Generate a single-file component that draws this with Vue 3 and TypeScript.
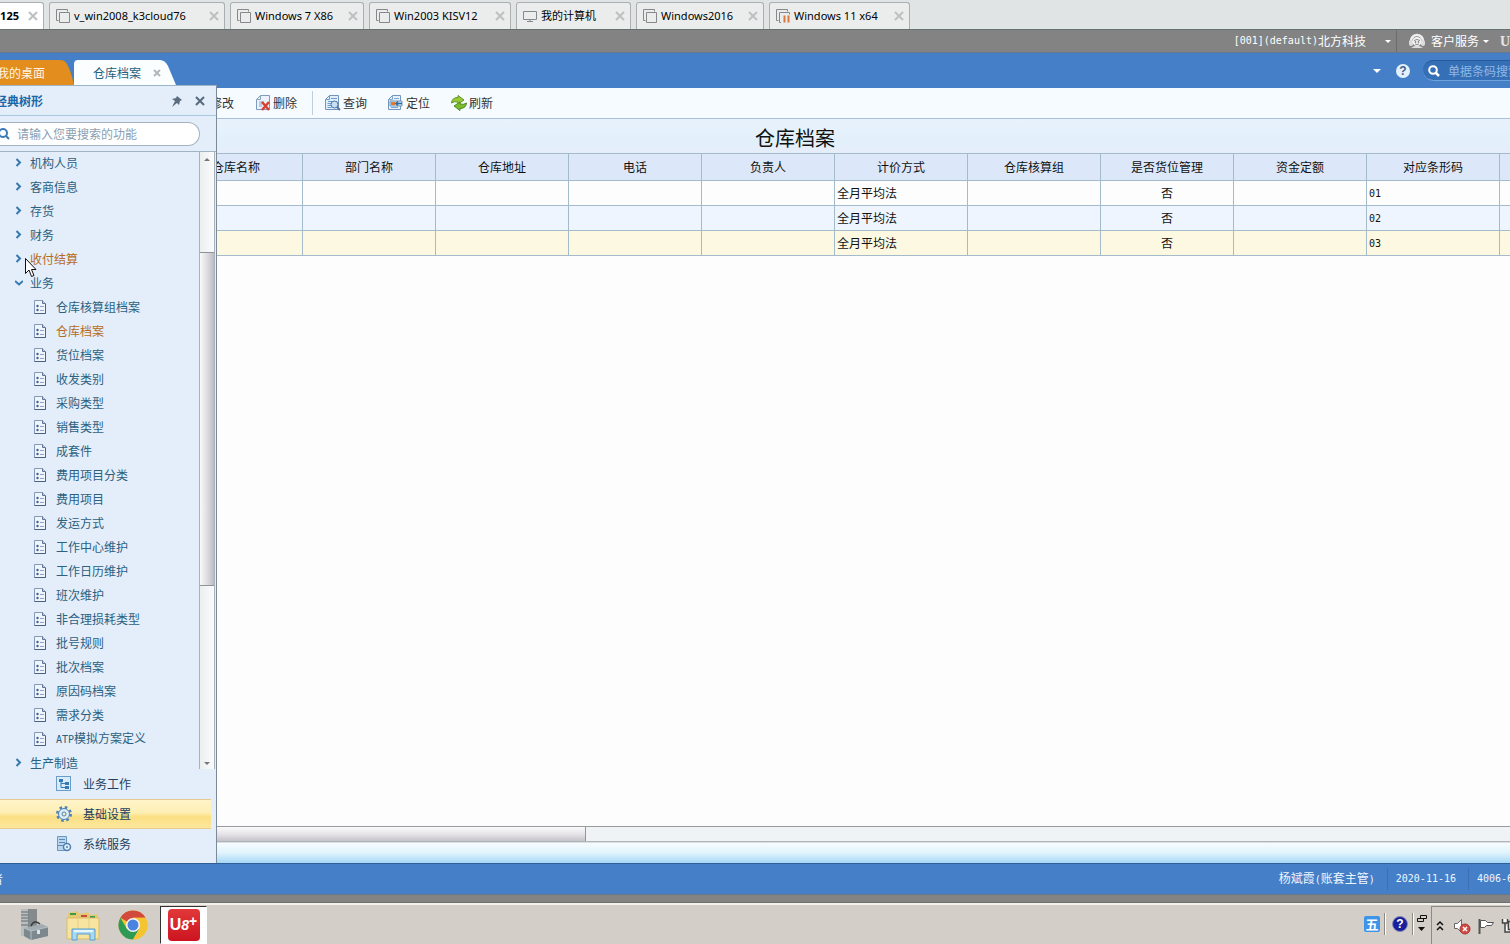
<script setup lang="ts">
import { ref } from 'vue'

interface MachineTab {
  name: string
  width: number
  kind: 'vm' | 'computer' | 'paused'
}

interface TreeNode {
  label: string
  code?: string
  kind: 'closed' | 'open' | 'leaf'
  hot?: boolean
}

const machines: MachineTab[] = [
  { name: 'v_win2008_k3cloud76', width: 176, kind: 'vm' },
  { name: 'Windows 7 X86', width: 134, kind: 'vm' },
  { name: 'Win2003 KISV12', width: 142, kind: 'vm' },
  { name: '我的计算机', width: 115, kind: 'computer' },
  { name: 'Windows2016', width: 128, kind: 'vm' },
  { name: 'Windows 11 x64', width: 141, kind: 'paused' },
]

const leaf = (label: string, hot = false): TreeNode => ({ label, kind: 'leaf', hot })

const nodes: TreeNode[] = [
  { label: '机构人员', kind: 'closed' },
  { label: '客商信息', kind: 'closed' },
  { label: '存货', kind: 'closed' },
  { label: '财务', kind: 'closed' },
  { label: '收付结算', kind: 'closed', hot: true },
  { label: '业务', kind: 'open' },
  leaf('仓库核算组档案'),
  leaf('仓库档案', true),
  leaf('货位档案'),
  leaf('收发类别'),
  leaf('采购类型'),
  leaf('销售类型'),
  leaf('成套件'),
  leaf('费用项目分类'),
  leaf('费用项目'),
  leaf('发运方式'),
  leaf('工作中心维护'),
  leaf('工作日历维护'),
  leaf('班次维护'),
  leaf('非合理损耗类型'),
  leaf('批号规则'),
  leaf('批次档案'),
  leaf('原因码档案'),
  leaf('需求分类'),
  { label: '模拟方案定义', code: 'ATP', kind: 'leaf' },
  { label: '生产制造', kind: 'closed' },
]

const columns = ['仓库名称', '部门名称', '仓库地址', '电话', '负责人', '计价方式', '仓库核算组', '是否货位管理', '资金定额', '对应条形码']
const rows = ['01', '02', '03']
const selected = ref('03')
const treeQuery = ref('')
const billQuery = ref('')
</script>

<template>
  <div class="page">
    <nav class="machines" aria-label="虚拟机">
      <div class="machine current">
        <b>125</b>
        <button class="close" aria-label="关闭"><svg width="10" height="10" viewBox="0 0 10 10"><path d="M1 1l8 8M9 1l-8 8" /></svg></button>
      </div>
      <div v-for="m in machines" :key="m.name" class="machine" :style="{ width: m.width + 'px' }">
        <svg v-if="m.kind === 'computer'" class="mi" width="16" height="16" viewBox="0 0 16 16"><path d="M1.500 3.500h13v8h-13zM5 13.500h6M8 11.500v2" /></svg>
        <svg v-else-if="m.kind === 'vm'" class="mi" width="16" height="16" viewBox="0 0 16 16"><path d="M3.500 12.500h-2v-11h11v2M4.500 4.500h10v10h-10z" /></svg>
        <svg v-else class="mi" width="16" height="16" viewBox="0 0 16 16"><path d="M3.500 12.500h-2v-11h11v2M6 14.500h-1.500v-10h10v2" /><path class="pause" d="M9.500 7.500v7M13.500 7.500v7" /></svg>
        <span class="mname">{{ m.name }}</span>
        <button class="close" aria-label="关闭"><svg width="10" height="10" viewBox="0 0 10 10"><path d="M1 1l8 8M9 1l-8 8" /></svg></button>
      </div>
    </nav>

    <div class="account">
      <button class="acct"><span class="mono">[001](default)</span>北方科技<i class="caret" /></button>
      <button class="service">
        <svg width="16" height="16" viewBox="0 0 16 16">
          <path d="M2 8a6 6 0 0 1 12 0" fill="none" stroke="#eee" stroke-width="2.500" />
          <rect x="0" y="7" width="4" height="6" rx="2" fill="#ddd" /><rect x="12" y="7" width="4" height="6" rx="2" fill="#ddd" />
          <circle cx="8" cy="8.500" r="4.500" fill="#f4f4f4" /><path d="M5 7.500q3-2 6 0M6 11q2 1 4 0" fill="none" stroke="#888" />
          <circle cx="6.500" cy="9" r=".8" fill="#555" /><circle cx="9.500" cy="9" r=".8" fill="#555" />
          <path d="M2 15q6-5 12 0z" fill="#ddd" />
        </svg>
        客户服务<i class="caret" />
      </button>
      <b class="brand">U</b>
    </div>

    <div class="shell">
      <header class="topbar">
        <button class="ptab desk">
          <svg width="74" height="25" viewBox="0 0 74 25"><path d="M0 0H60Q65 0 67 4Q71 11 74 25H0z" fill="#e28d1d" /></svg>
          <span>我的桌面</span>
        </button>
        <button class="ptab file">
          <svg width="102" height="25" viewBox="0 0 102 25"><path d="M0 25V4Q0 0 4 0H86Q91 0 94 6L102 25z" fill="#fbfeff" /></svg>
          <span>仓库档案</span>
          <svg class="tx" width="8" height="8" viewBox="0 0 8 8"><path d="M1 1l6 6M7 1l-6 6" stroke="#b2b6ba" stroke-width="2" /></svg>
        </button>
        <div class="tools">
          <i class="caret wide" />
          <button class="help" aria-label="帮助">?</button>
          <label class="bill">
            <svg width="12" height="12" viewBox="0 0 12 12"><circle cx="5" cy="5" r="3.800" fill="none" stroke="#fff" stroke-width="2" /><path d="M8 8l3 3" stroke="#fff" stroke-width="2.500" /></svg>
            <input v-model="billQuery" placeholder="单据条码搜索" aria-label="单据条码搜索" />
          </label>
        </div>
      </header>

      <div class="toolbar">
        <div class="group">
          <button>
            <svg width="16" height="16" viewBox="0 0 16 16"><path d="M2.500 1.500h11v13h-11z" fill="#eef5fc" stroke="#8ba4bf" /></svg>修改
          </button>
          <button>
            <svg width="16" height="16" viewBox="0 0 16 16"><path d="M5.500.500h9v14h-13v-10z" fill="#eaf3fc" stroke="#7f9cbe" /><path d="M1.500 4.500h4v-4M4 7h5M4 9h3M4 11h3" fill="none" stroke="#8ba4bf" /><path d="M7 7l7 8M14 7l-7 8" stroke="#d8402f" stroke-width="2.500" /></svg>删除
          </button>
        </div>
        <i class="split" />
        <div class="group">
          <button>
            <svg width="16" height="16" viewBox="0 0 16 16"><path d="M4.500.500h9v14h-13v-10z" fill="#e1effb" stroke="#7495bb" /><path d="M.5 4.500h4v-4M6 3.500h6M3 6.500h9M2.500 8.500h4M2.500 10.500h4M2.500 12.500h4" fill="none" stroke="#6f9cce" /><circle cx="9.500" cy="9.500" r="3.500" fill="#c6e0f4" stroke="#54779d" /><path d="M12 12l3 3" stroke="#54779d" stroke-width="2" /></svg>查询
          </button>
          <button>
            <svg width="16" height="16" viewBox="0 0 16 16"><path d="M4.500.500h8v14h-12v-10z" fill="#e6f1fb" stroke="#7495bb" /><path d="M.5 4.500h4v-4M6 3.500h5M3 12.500h7" fill="none" stroke="#7fa8d2" /><path d="M2 6h12v5H2z" fill="#cfe2f3" stroke="#7495bb" /><path d="M3 7h4v3H3z" fill="#e27a30" /><path d="M7 8.500h7M10 6.500l-2 2 2 2" fill="none" stroke="#2f6c9f" stroke-width="1.500" /></svg>定位
          </button>
          <button>
            <svg width="16" height="16" viewBox="0 0 16 16"><path d="M.5 8Q1 2.500 7 2.500V.500l6 4.500-6 4V7Q3 6 .5 8z" fill="#9acb35" stroke="#5c9423" /><path d="M15.500 8Q15 13.500 9 13.500v2L3 11l6-4v2q4 1 6.500-1z" fill="#7cbb2c" stroke="#4f8a20" /></svg>刷新
          </button>
        </div>
      </div>

      <h1 class="title">仓库档案</h1>
      <div class="grid">
        <table>
          <thead>
            <tr><th class="lead" /><th v-for="c in columns" :key="c" scope="col">{{ c }}</th><th /></tr>
          </thead>
          <tbody>
            <tr v-for="r in rows" :key="r" :class="{ picked: selected === r }" @click="selected = r">
              <td /><td /><td /><td /><td /><td />
              <td>全月平均法</td><td /><td class="mid">否</td><td /><td><span class="mono">{{ r }}</span></td><td />
            </tr>
          </tbody>
        </table>
      </div>
      <div class="hbar"><div class="hthumb" /></div>
      <div class="glow" />

      <aside class="panel">
        <div class="phead">
          <b>经典树形</b>
          <button class="pin" aria-label="固定"><svg width="12" height="12" viewBox="0 0 12 12"><path d="M6 1l5 4-2 1-1 4-2-2-5 4 3-6-3-2 4-1z" fill="#5c6d7f" /></svg></button>
          <button aria-label="关闭"><svg width="10" height="10" viewBox="0 0 10 10"><path d="M1 1l8 8M9 1l-8 8" stroke="#56697c" stroke-width="2" /></svg></button>
        </div>
        <div class="find">
          <label>
            <svg width="10" height="12" viewBox="0 0 10 12"><circle cx="3" cy="5" r="4" fill="none" stroke="#3d7ab8" stroke-width="2" /><path d="M6 8l3 3" stroke="#3d7ab8" stroke-width="2" /></svg>
            <input v-model="treeQuery" placeholder="请输入您要搜索的功能" aria-label="搜索功能" />
          </label>
        </div>
        <div class="treebox">
          <ul class="tree">
            <li v-for="n in nodes" :key="n.label" :class="[n.kind, { hot: n.hot }]">
              <svg v-if="n.kind === 'closed'" width="8" height="10" viewBox="0 0 8 10"><path d="M1.500 1l3.500 3.500L1.500 8" fill="none" stroke="#3679ae" stroke-width="2" /></svg>
              <svg v-else-if="n.kind === 'open'" width="8" height="10" viewBox="0 0 8 10"><path d="M0 3l4 3.500L8 3" fill="none" stroke="#3679ae" stroke-width="2" /></svg>
              <svg v-else width="12" height="14" viewBox="0 0 12 14">
                <path d="M.5.500h8l3 3v10H.500z" fill="#f0f5fd" stroke="#8798b8" /><path d="M11.500 4v9.500H.500" fill="none" stroke="#4c5f88" /><path d="M8.500.500v3h3" fill="#bccbe4" stroke="#62779f" />
                <circle cx="3.500" cy="6" r="1.200" fill="#44608f" /><circle cx="3.500" cy="10" r="1.200" fill="#44608f" /><path d="M6 6.500h4M6 10.500h4" stroke="#8fa3ca" />
              </svg>
              <a href="#"><span v-if="n.code" class="mono">{{ n.code }}</span>{{ n.label }}</a>
            </li>
          </ul>
          <div class="vbar"><i class="up" /><div class="vthumb" /><i class="down" /></div>
        </div>
        <nav class="modules">
          <button>
            <svg width="16" height="16" viewBox="0 0 16 16"><rect x=".5" y=".5" width="14" height="14" fill="#d8ebfa" stroke="#6b9dc9" /><path d="M3 3h4v3H3zM9 6h4v3H9zM9 10h4v3H9z" fill="#3779b4" /><path d="M5 6v5.500h4M5 7.500h4" fill="none" stroke="#3779b4" /></svg>业务工作
          </button>
          <button class="on">
            <svg width="16" height="16" viewBox="0 0 16 16"><circle cx="8" cy="8" r="6.500" fill="none" stroke="#4f84b6" stroke-width="3" stroke-dasharray="2.500 2.600" /><circle cx="8" cy="8" r="5.500" fill="#d9ecf9" stroke="#4f84b6" /><circle cx="8" cy="8" r="2" fill="#fbeebb" stroke="#4f84b6" /></svg>基础设置
          </button>
          <button>
            <svg width="16" height="16" viewBox="0 0 16 16"><path d="M1.500.500h9v14h-9z" fill="#b9d6ee" stroke="#6c98c0" /><path d="M3 3.500h6M3 6.500h6M2 9.500h8" stroke="#5b8ab6" /><circle cx="11" cy="11" r="3.500" fill="#e1effa" stroke="#4e7fae" stroke-width="1.500" /><circle cx="11" cy="11" r="1" fill="#4e7fae" /></svg>系统服务
          </button>
        </nav>
        <svg class="pointer" width="12" height="20" viewBox="0 0 12 20"><path d="M.5.500v15l3.500-3.500 2.500 6.500 2.500-1-2.500-6h4.500z" fill="#fff" stroke="#111" /></svg>
      </aside>
    </div>

    <footer class="status">
      <div class="role">者</div>
      <span class="user">杨斌霞<span class="mono">(</span>账套主管<span class="mono">)</span></span>
      <span class="date mono">2020-11-16</span>
      <span class="phone mono">4006-6</span>
    </footer>
    <div class="band" />

    <div class="taskbar">
      <button class="task server" aria-label="服务器管理器">
        <svg width="30" height="34" viewBox="0 0 30 34">
          <path d="M2 1h16v27H2z" fill="#7e8588" /><path d="M2 1h7v27H2z" fill="#b8bdbe" /><path d="M2 4h7M2 7h7M2 10h7M2 13h7M2 17h7" stroke="#666c70" />
          <path d="M10 1h8v17h-8z" fill="#858b8c" /><path d="M5 20l18-4 6 3v9l-17 4-7-4z" fill="#a3adb1" /><path d="M5 20l7 3 17-4v9l-17 4-7-4z" fill="#7c888d" /><path d="M12 18q3-7 9-2" fill="none" stroke="#333b40" stroke-width="1.500" /><path d="M12 23v9M5 20l7 3 17-4" fill="none" stroke="#b4bfc4" /><path d="M18 22h3v4h-3z" fill="#dbe0e2" />
        </svg>
      </button>
      <button class="task folder" aria-label="资源管理器">
        <svg width="34" height="34" viewBox="0 0 34 34">
          <path d="M2 5l9-2 3 3 8-2 2 3 8-1v25H2z" fill="#e4c872" /><path d="M4 6h6M24 9h5" stroke="#3a9a4b" stroke-width="2" /><path d="M15 8h6" stroke="#c94a36" stroke-width="2" />
          <path d="M1 10h32v21H1z" fill="#f6e4a0" stroke="#d9bd68" /><path d="M12 10v19M23 10v19" stroke="#e6cf86" />
          <path d="M6 32V21h23v11h-5v-6H11v6z" fill="#a9d8f2" stroke="#5b9fcb" /><path d="M8 23h19" stroke="#e7f6fd" stroke-width="2" />
        </svg>
      </button>
      <button class="task chrome" aria-label="Chrome">
        <svg width="30" height="30" viewBox="0 0 30 30">
          <circle cx="15" cy="15" r="14.500" fill="#f5c431" />
          <path d="M15 15L2.440 7.750A14.500 14.500 0 0 1 27.560 7.750H15z" fill="#d14a3b" />
          <path d="M2.440 7.750A14.500 14.500 0 0 0 15 29.500L21.300 18.600 15 15 8.700 18.600z" fill="#2f9a55" /><path d="M27.560 7.750H15l6.300 10.900L15 29.500A14.500 14.500 0 0 0 27.560 7.750z" fill="#f5c431" />
          <circle cx="15" cy="15" r="7" fill="#f7f7f7" /><circle cx="15" cy="15" r="5.500" fill="#4b83e0" />
        </svg>
      </button>
      <button class="task u8" aria-label="U8+"><span class="tile"><b>U</b><i>8</i><sup>+</sup></span></button>

      <div class="lang">
        <span class="ime">五</span><i class="groove" />
        <span class="q">?</span><i class="groove" />
        <svg width="12" height="20" viewBox="0 0 12 20"><path d="M4.500 1.500h6v3h-6zM1.500 4.500h6v3h-6z" fill="#d3cfc8" stroke="#111" /><path d="M2 13h7l-3.500 4z" fill="#111" /></svg>
      </div>
      <div class="tray">
        <svg class="more" width="8" height="12" viewBox="0 0 8 12"><path d="M1 5l3-3 3 3M1 10l3-3 3 3" fill="none" stroke="#111" stroke-width="1.500" /></svg>
        <svg width="18" height="18" viewBox="0 0 18 18"><path d="M1.500 6.500h3l4-4v13l-4-4h-3z" fill="#fff" stroke="#666" /><circle cx="12" cy="12" r="5" fill="#d14b44" stroke="#a33832" /><path d="M10 10l4 4M14 10l-4 4" stroke="#fff" stroke-width="1.500" /></svg>
        <svg width="18" height="18" viewBox="0 0 18 18"><path d="M2.500 2v15" stroke="#555" stroke-width="2" /><path d="M3.500 3.500h5l2 2h6l-2 3h-5l-2 2h-4z" fill="#fff" stroke="#555" /></svg>
        <svg width="18" height="18" viewBox="0 0 18 18"><path d="M1.500 2v4h5V2M4 6v9h5M7.500 4.500h10v8h-10z" fill="#f4f4f4" stroke="#444" stroke-width="1.500" /></svg>
      </div>
    </div>
  </div>
</template>

<style>
html, body { margin: 0; overflow: hidden; }
</style>

<style scoped>
.page { display: flex; flex-direction: column; height: 100vh; overflow: hidden; font: 12px/22px "Noto Sans CJK SC", "Liberation Sans", sans-serif; color: #111; }
* { box-sizing: border-box; }
svg { display: block; flex: none; }
button { display: flex; align-items: center; padding: 0; border: 0; background: none; font: inherit; color: inherit; white-space: nowrap; }
input { min-width: 0; padding: 0; border: 0; outline: 0; background: none; font: inherit; }
a { color: inherit; text-decoration: none; }
.mono { font-family: "DejaVu Sans Mono", "Liberation Mono", monospace; font-size: 10px; line-height: 22px; }
.caret { flex: none; border: 3px solid transparent; border-top-color: #fff; border-bottom: 0; }
.caret.wide { border-width: 4px 4px 0; }

.machines { display: flex; flex: none; gap: 5px; height: 29px; padding-top: 2px; background: #e1e4e4; }
.machine { display: flex; flex: none; align-items: center; padding: 0 5px; border: 1px solid #aab0b0; border-bottom: 0; border-radius: 3px 3px 0 0; background: #ebeded; font-family: "Noto Sans", "Noto Sans CJK SC", sans-serif; font-size: 11px; color: #000; white-space: nowrap; }
.machine.current { justify-content: flex-end; width: 44px; gap: 9px; border-left: 0; border-top-left-radius: 0; background: #fff; }
.mi { margin-right: 3px; fill: none; stroke: #85898b; }
.pause { stroke: #d9783c; stroke-width: 2; }
.close { margin-left: auto; }
.current .close { margin-left: 0; }
.close svg { stroke: #bcc0c1; stroke-width: 2; }

.account { display: flex; flex: none; justify-content: flex-end; height: 24px; border-top: 1px solid #67716f; border-bottom: 1px solid #65788c; background: #838383; color: #fff; }
.acct { padding-right: 5px; border-right: 1px solid #6d6d6d; }
.acct .caret { margin-left: 19px; }
.service { padding-left: 12px; }
.service svg { margin-right: 6px; }
.service .caret { margin-left: 4px; }
.brand { width: 10px; margin-left: 11px; overflow: hidden; font: bold 14px/24px "Liberation Serif", serif; color: #e8e8e8; }

.shell { position: relative; display: flex; flex: 1; flex-direction: column; min-height: 0; background: #fdfdfd; }
.topbar { display: flex; flex: none; height: 35px; padding-top: 7px; background: #447fc8; }
.ptab { position: relative; height: 25px; }
.ptab > svg:first-child { position: absolute; inset: 0; }
.ptab span { position: relative; }
.desk { justify-content: flex-end; width: 74px; padding-right: 29px; overflow: hidden; color: #fff6e3; }
.file { width: 102px; padding-left: 19px; color: #26607e; }
.tx { position: relative; margin-left: 12px; }
.tools { display: flex; align-items: center; height: 21px; margin-left: auto; }
.help { justify-content: center; width: 14px; height: 14px; margin: 0 13px 0 15px; border-radius: 7px; background: #e4f1fc; color: #3b6492; font: bold 12px/14px "Liberation Sans", sans-serif; }
.bill { display: flex; align-items: center; gap: 8px; width: 87px; height: 21px; padding-left: 5px; overflow: hidden; border-top: 1px solid #29599a; border-bottom: 1px solid #6fa3df; border-radius: 11px 0 0 11px; background: #356fb5; }
.bill input { flex: none; width: 80px; color: #fff; }
.bill input::placeholder { color: #8fb9e8; opacity: 1; }

.toolbar { display: flex; flex: none; align-items: center; height: 31px; padding-left: 192px; border-bottom: 1px solid #aabfda; background: #f6fbff; }
.group { display: flex; gap: 21px; }
.group button { gap: 2px; color: #333; }
.split { width: 1px; height: 24px; margin: 0 12px 0 15px; background: #c2cfdc; }
.title { flex: none; height: 34px; margin: 0; padding-left: 80px; background: linear-gradient(#e8f2fd, #e2f0fa 70%, #e7edfa); font-size: 20px; font-weight: 400; line-height: 38px; text-align: center; }
.grid { flex: 1; min-height: 0; overflow: hidden; }
table { width: 1633px; table-layout: fixed; border-spacing: 0; }
th, td { height: 25px; padding: 0 2px; border-right: 1px solid #a3bbcb; border-bottom: 1px solid #a3bbcb; line-height: 22px; text-align: left; white-space: nowrap; }
th { width: 133px; height: 28px; border-top: 1px solid #a3bbcb; background: #dce8fa; font-weight: 400; text-align: center; }
th.lead { width: 170px; }
tbody tr:nth-child(even) { background: #eff5fe; }
tbody tr.picked { background: #fdf8e2; }
.mid { text-align: center; }
.hbar { flex: none; height: 16px; border-top: 1px solid #999b9e; border-bottom: 1px solid #b0b4b8; background: #eff3f6; }
.hthumb { width: 586px; height: 14px; border-right: 1px solid #92959a; background: linear-gradient(#fafafa, #e6e4e8 50%, #c4c3ca); }
.glow { flex: none; height: 21px; border-top: 1px solid #d8e0e4; background: linear-gradient(#f7fcff, #e0f3fb 50%, #a5d7f7); }

.panel { position: absolute; top: 32px; bottom: 0; left: 0; display: flex; flex-direction: column; width: 217px; border-top: 1px solid #9eb3c4; border-right: 1px solid #7d8a98; background: #e3eefa; }
.phead { display: flex; flex: none; align-items: center; height: 30px; padding-right: 11px; border-bottom: 1px solid #a8c8e2; }
.phead b { display: flex; justify-content: flex-end; width: 43px; overflow: hidden; color: #1b67a8; white-space: nowrap; }
.pin { margin: 0 12px 0 auto; }
.find { flex: none; height: 36px; padding-top: 6px; border-bottom: 1px solid #a2b4c4; }
.find label { display: flex; align-items: center; gap: 7px; width: 200px; height: 24px; border: 1px solid #a4b2bf; border-left: 0; border-radius: 0 12px 12px 0; background: #fff; }
.find input { flex: 1; height: 22px; }
.find input::placeholder { color: #8ba0b2; opacity: 1; }
.treebox { display: flex; flex: 1; min-height: 0; overflow: hidden; }
.tree { flex: 1; margin: 0; padding: 0; overflow: hidden; list-style: none; color: #2b607f; }
.tree li { display: flex; align-items: center; height: 24px; padding-bottom: 2px; padding-left: 15px; gap: 7px; }
.tree li.leaf { padding-left: 34px; gap: 10px; }
.tree li.hot { color: #b56c21; }
.vbar { display: flex; flex: none; flex-direction: column; align-items: center; width: 16px; margin-right: 1px; border-right: 1px solid #a9b1b9; border-left: 1px solid #a9b1b9; background: linear-gradient(90deg, #eceeef, #f9fbfd); }
.up { margin: 6px 0 91px; border: 3px solid transparent; border-top: 0; border-bottom-color: #777; }
.vthumb { width: 100%; height: 334px; border-top: 1px solid #8f9499; border-bottom: 1px solid #8f9499; background: linear-gradient(90deg, #fafafa, #dedde2 50%, #bcbbc2); }
.down { margin: auto 0 4px; border: 3px solid transparent; border-top-color: #777; border-bottom: 0; }
.modules { flex: none; padding-bottom: 4px; color: #23405f; }
.modules button { gap: 11px; width: 211px; height: 30px; padding-left: 56px; border: 1px solid transparent; border-width: 1px 0; }
.modules .on { border-color: #e6ca8e; background: linear-gradient(#fff4c9, #fdefb4 45%, #fbdf83 60%, #fce79c); }
.pointer { position: absolute; top: 172px; left: 25px; }

.status { display: flex; flex: none; align-items: center; height: 31px; border-top: 1px solid #315f97; background: #447fc8; color: #eef6ff; white-space: nowrap; }
.role { display: flex; justify-content: flex-end; width: 3px; overflow: hidden; }
.user { margin-left: auto; padding-right: 12px; }
.date { padding: 0 12px 0 8px; border-left: 1px solid #3a70b3; }
.phone { width: 42px; padding-left: 8px; overflow: hidden; border-left: 1px solid #3a70b3; }
.band { flex: none; height: 9px; border-top: 1px solid #64788e; border-bottom: 1px solid #6f6f6f; background: #838383; }

.taskbar { display: flex; flex: none; height: 41px; border-top: 2px solid #f3f1ec; background: #d3cfc8; }
.task { flex: none; }
.server { margin-left: 19px; }
.folder { margin-left: 17px; }
.chrome { margin-left: 18px; }
.u8 { justify-content: center; width: 47px; height: 38px; margin: 1px 0 0 12px; border: 1px solid #fff; border-top-color: #333; border-left-color: #333; background: #fff; }
.tile { display: flex; align-items: center; justify-content: center; width: 32px; height: 32px; border-radius: 4px; background: linear-gradient(#e2383a, #cc1420); color: #fff; font: bold 16px/16px "Liberation Sans", sans-serif; }
.tile i { font-size: 14px; }
.tile sup { align-self: flex-start; margin-top: 5px; font-size: 14px; line-height: 14px; }
.lang { display: flex; align-items: center; height: 37px; margin-left: auto; gap: 6px; padding-right: 3px; }
.lang svg { margin-left: -4px; }
.ime { width: 16px; height: 16px; border-radius: 2px; background: #3d94e8; color: #fff; font-size: 13px; font-weight: 700; line-height: 15px; text-align: center; }
.groove { width: 2px; height: 22px; border-left: 1px solid #8d8a84; background: #fff; }
.lang .groove { margin-left: -2px; }
.q { width: 16px; height: 16px; border: 1px solid #8488b8; border-radius: 8px; background: #17209a; color: #fff; font: bold 12px/14px "Liberation Sans", sans-serif; text-align: center; }
.tray { display: flex; align-items: center; gap: 6px; width: 79px; height: 38px; margin-top: 1px; padding-left: 4px; overflow: hidden; border-top: 1px solid #8d8a84; border-left: 1px solid #8d8a84; }
.more { margin-right: 3px; }
</style>
